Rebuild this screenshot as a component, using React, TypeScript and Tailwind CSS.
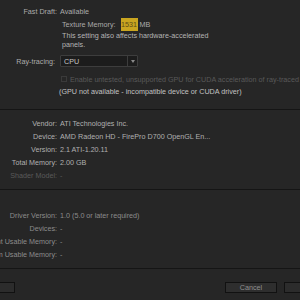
type Info = { label: string; value: string; dim?: boolean };

const gpuInfo: Info[] = [
  { label: "Vendor:", value: "ATI Technologies Inc." },
  { label: "Device:", value: "AMD Radeon HD - FirePro D700 OpenGL En..." },
  { label: "Version:", value: "2.1 ATI-1.20.11" },
  { label: "Total Memory:", value: "2.00 GB" },
  { label: "Shader Model:", value: "-", dim: true },
];

const cudaInfo: Info[] = [
  { label: "Driver Version:", value: "1.0 (5.0 or later required)" },
  { label: "Devices:", value: "-" },
  { label: "Current Usable Memory:", value: "-" },
  { label: "Maximum Usable Memory:", value: "-" },
];

function InfoRow({ item, tone }: { item: Info; tone: string }) {
  return (
    <div className="flex h-[13px] items-center">
      <div className="flex w-[57px] shrink-0 justify-end whitespace-nowrap">
        <span className={item.dim ? "text-[#5a5a5a]" : tone}>{item.label}</span>
      </div>
      <span className={`ml-[3px] whitespace-nowrap ${item.dim ? "text-[#5a5a5a]" : tone}`}>
        {item.value}
      </span>
    </div>
  );
}

function Divider() {
  return <div className="h-px w-full bg-[#151515]" />;
}

export default function App() {
  return (
    <div className="h-[300px] w-[300px] overflow-hidden bg-[#262626] font-['Liberation_Sans',Arial,sans-serif] text-[7.2px] leading-[9px] text-[#ababab]">
      <div className="pt-[5px]">
        <InfoRow item={{ label: "Fast Draft:", value: "Available" }} tone="text-[#ababab]" />

        <div className="flex h-[13px] items-center pl-[62px] whitespace-nowrap">
          <span>Texture Memory:</span>
          <span className="ml-[5px] flex h-[13px] w-[17px] items-center justify-center bg-[#c9a520] text-[#5c4c18]">
            1531
          </span>
          <span className="ml-[2px]">MB</span>
        </div>
        <p className="pl-[62px] text-[#b4b4b4]">
          This setting also affects hardware-accelerated
          <br />
          panels.
        </p>

        <div className="mt-[6px] flex h-[12px] items-center">
          <div className="flex w-[55px] shrink-0 justify-end whitespace-nowrap">Ray-tracing:</div>
          <div className="ml-[5px] flex h-[12px] w-[78px] items-center rounded-[1px] border border-[#3d3d3d] bg-[#1c1c1c] text-[#c4c4c4]">
            <span className="flex-1 pl-[3px]">CPU</span>
            <div className="flex h-full w-[10px] items-center justify-center border-l border-[#3d3d3d]">
              <span className="h-0 w-0 border-x-[2.5px] border-t-[3px] border-x-transparent border-t-[#8a8a8a]" />
            </div>
          </div>
        </div>

        <div className="mt-[6px] flex h-[12px] items-center pl-[61px] whitespace-nowrap text-[#595959]">
          <span className="h-[6px] w-[6px] shrink-0 border border-[#3a3a3a]" />
          <span className="ml-[3px]">
            Enable untested, unsupported GPU for CUDA acceleration of ray-traced 3D
          </span>
        </div>
        <div className="flex h-[12px] items-center pl-[59px] whitespace-nowrap text-[#c2c2c2]">
          (GPU not available - incompatible device or CUDA driver)
        </div>

        <div className="mt-[12px]">
          <Divider />
        </div>

        <div className="mt-[7px]">
          {gpuInfo.map((item) => (
            <InfoRow key={item.label} item={item} tone="text-[#b0b0b0]" />
          ))}
        </div>

        <div className="mt-[7px]">
          <Divider />
        </div>

        <div className="mt-[19px]">
          {cudaInfo.map((item) => (
            <InfoRow key={item.label} item={item} tone="text-[#8c8c8c]" />
          ))}
        </div>

        <div className="mt-[7px]">
          <Divider />
        </div>

        <div className="mt-[13px] flex h-[11px]">
          <button className="ml-[-45px] h-[11px] w-[60px] shrink-0 border border-[#111] bg-[#2c2c2c]" />
          <button className="ml-[210px] flex h-[11px] w-[52px] shrink-0 items-center justify-center border border-[#111] bg-[#2e2e2e] text-[#8f8f8f]">
            Cancel
          </button>
          <button className="ml-[7px] h-[11px] w-[52px] shrink-0 border border-[#111] bg-[#2c2c2c] text-[#a0a0a0]">
            OK
          </button>
        </div>
      </div>
    </div>
  );
}
